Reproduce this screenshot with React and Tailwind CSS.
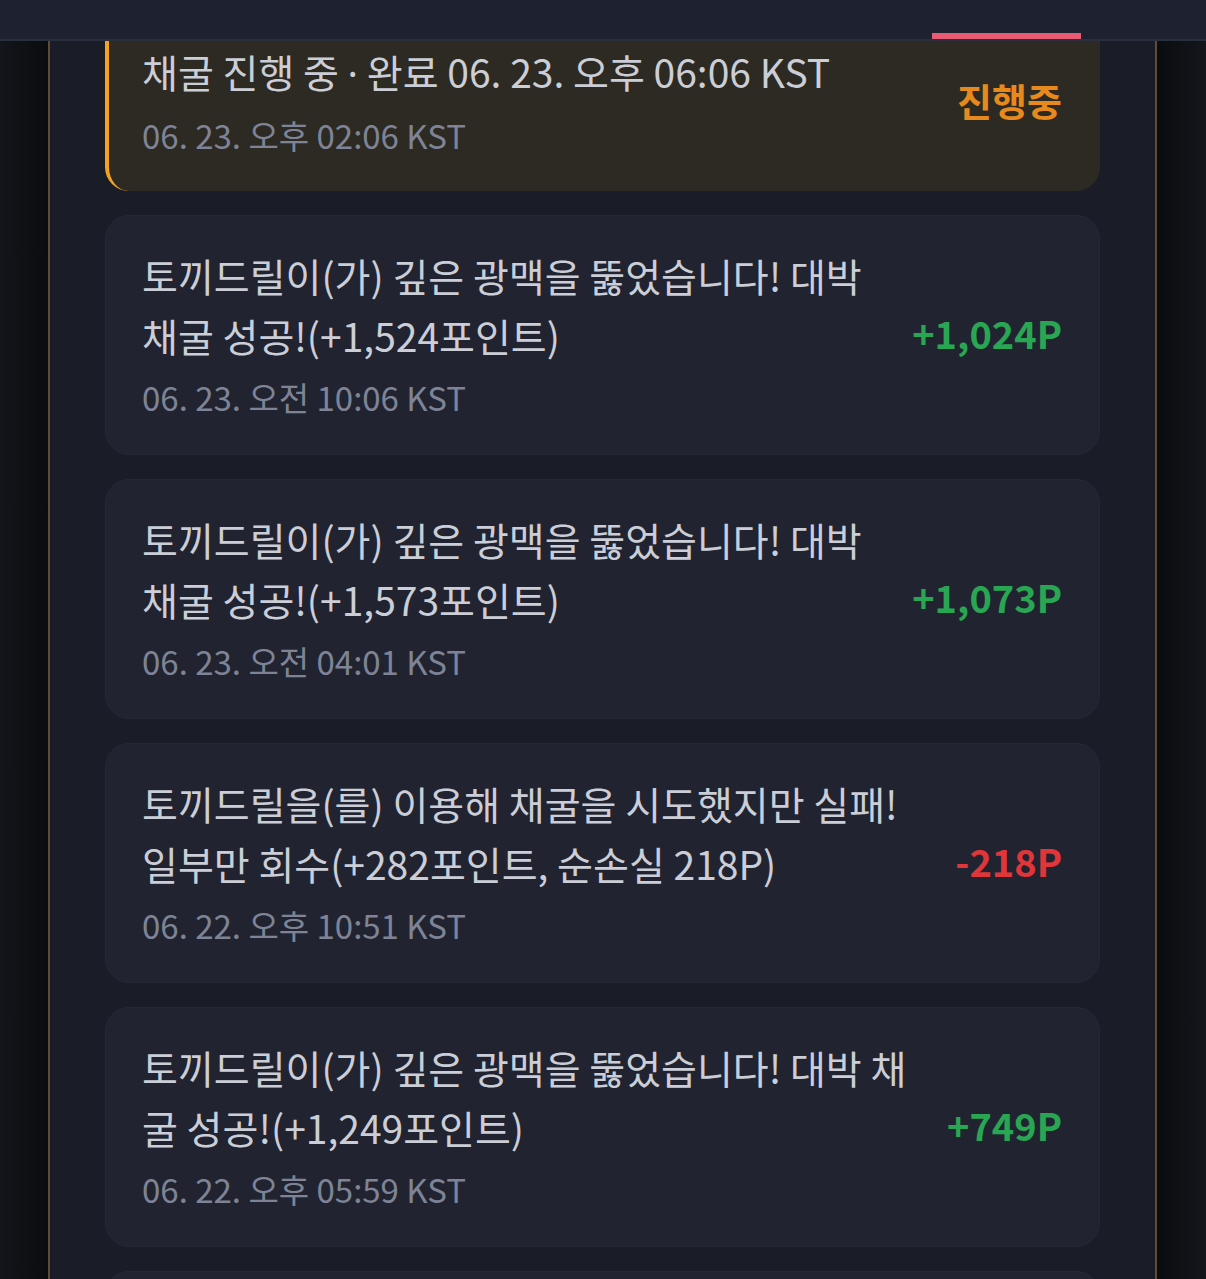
import React from "react";

const items = [
  {
    title: "토끼드릴이(가) 깊은 광맥을 뚫었습니다! 대박 채굴 성공!(+1,524포인트)",
    date: "06. 23. 오전 10:06 KST",
    amount: "+1,024P",
    positive: true,
  },
  {
    title: "토끼드릴이(가) 깊은 광맥을 뚫었습니다! 대박 채굴 성공!(+1,573포인트)",
    date: "06. 23. 오전 04:01 KST",
    amount: "+1,073P",
    positive: true,
  },
  {
    title: "토끼드릴을(를) 이용해 채굴을 시도했지만 실패! 일부만 회수(+282포인트, 순손실 218P)",
    date: "06. 22. 오후 10:51 KST",
    amount: "-218P",
    positive: false,
  },
  {
    title: "토끼드릴이(가) 깊은 광맥을 뚫었습니다! 대박 채굴 성공!(+1,249포인트)",
    date: "06. 22. 오후 05:59 KST",
    amount: "+749P",
    positive: true,
  },
  {
    title: "토끼드릴이(가) 깊은 광맥을 뚫었습니다! 대박 채굴 성공!(+1,249포인트)",
    date: "06. 22. 오후 05:59 KST",
    amount: "+749P",
    positive: true,
  },
];

export default function App() {
  return (
    <div
      className="w-[1206px] h-[1279px] overflow-hidden flex flex-col bg-[#1a1d27]"
      style={{ fontFamily: '"Noto Sans CJK KR", "Noto Sans", sans-serif' }}
    >
      {/* header */}
      <div className="h-[41px] shrink-0 bg-[#1d2130] border-b-2 border-[#2a2f3d] relative z-10">
        <div className="absolute left-[932px] bottom-0 w-[149px] h-[6px] bg-[#ea5a72]" />
      </div>
      {/* body */}
      <div className="flex-1 flex overflow-hidden">
        <div className="w-[48px] shrink-0 bg-gradient-to-r from-[#13151b] to-[#0b0c0f]" />
        <div className="w-[2px] shrink-0 bg-[#5e4c35]" />
        <div className="w-[1105px] shrink-0 bg-[#1a1d27] overflow-hidden">
          <div className="flex flex-col gap-[24px] pl-[55px] pr-[55px] -mt-[30px]">
            {/* in-progress card */}
            <div className="rounded-[24px] bg-[#2d2a23] border-l-[4px] border-[#f5a31f] pl-[33px] pr-[38px] pt-[30px] pb-[34px] flex items-center gap-[20px]">
              <div className="flex-1 min-w-0">
                <div className="text-[39px] leading-[60px] text-[#cbced6]">
                  채굴 진행 중 <span style={{ fontFamily: '"Noto Sans", sans-serif' }}>·</span> 완료 06. 23. 오후 06:06 KST
                </div>
                <div className="mt-[10px] text-[33px] leading-[44px] text-[#7e8495]">
                  06. 23. 오후 02:06 KST
                </div>
              </div>
              <div className="text-[38px] font-bold text-[#e8891d]">진행중</div>
            </div>
            {items.map((it, i) => (
              <div
                key={i}
                className="rounded-[24px] bg-[#212430] border border-[#252936] pl-[36px] pr-[37px] pt-[29px] pb-[35px] flex items-center gap-[20px]"
              >
                <div className="flex-1 min-w-0">
                  <div className="text-[39px] leading-[60px] text-[#cbced6]">{it.title}</div>
                  <div className="mt-[10px] text-[33px] leading-[44px] text-[#7e8495]">{it.date}</div>
                </div>
                <div
                  className={
                    "text-[38px] font-bold shrink-0 " +
                    (it.positive ? "text-[#29a653]" : "text-[#e0363a]")
                  }
                >
                  {it.amount}
                </div>
              </div>
            ))}
          </div>
        </div>
        <div className="w-[2px] shrink-0 bg-[#5e4c35]" />
        <div className="flex-1 bg-gradient-to-r from-[#0b0c0f] to-[#14161c]" />
      </div>
    </div>
  );
}
